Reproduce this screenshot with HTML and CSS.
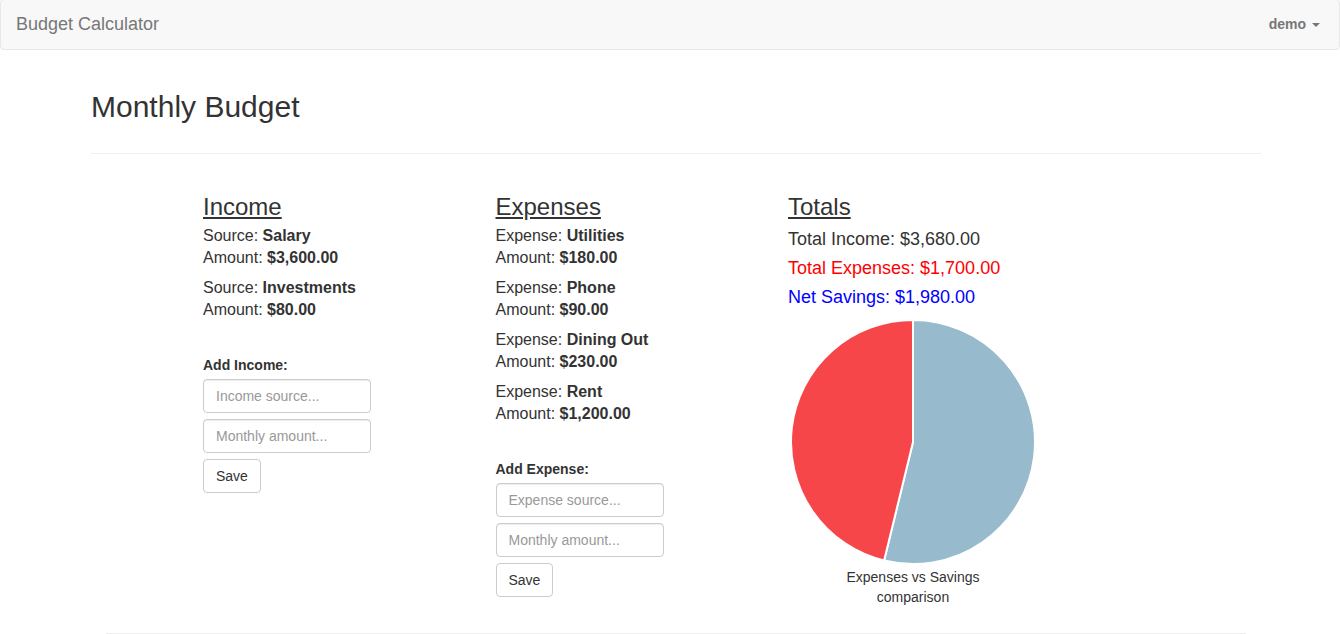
FILE: index.html
```html
<!DOCTYPE html>
<html lang="en">
<head>
<meta charset="utf-8">
<title>Budget Calculator</title>
<link rel="stylesheet" href="styles.css">
</head>
<body>
<nav class="navbar">
  <a class="brand" href="#">Budget Calculator</a>
  <a class="user" href="#">demo <span class="caret"></span></a>
</nav>
<main class="page">
  <h2 class="title">Monthly Budget</h2>
  <hr class="rule">
  <div class="columns">
    <section class="col">
      <h3 class="col-title">Income</h3>
      <div class="item">Source: <b>Salary</b><br>Amount: <b>$3,600.00</b></div>
      <div class="item">Source: <b>Investments</b><br>Amount: <b>$80.00</b></div>
      <form class="add-form">
        <label class="form-label">Add Income:</label>
        <input class="field" type="text" placeholder="Income source...">
        <input class="field" type="text" placeholder="Monthly amount...">
        <button class="btn" type="button">Save</button>
      </form>
    </section>
    <section class="col">
      <h3 class="col-title">Expenses</h3>
      <div class="item">Expense: <b>Utilities</b><br>Amount: <b>$180.00</b></div>
      <div class="item">Expense: <b>Phone</b><br>Amount: <b>$90.00</b></div>
      <div class="item">Expense: <b>Dining Out</b><br>Amount: <b>$230.00</b></div>
      <div class="item">Expense: <b>Rent</b><br>Amount: <b>$1,200.00</b></div>
      <form class="add-form">
        <label class="form-label">Add Expense:</label>
        <input class="field" type="text" placeholder="Expense source...">
        <input class="field" type="text" placeholder="Monthly amount...">
        <button class="btn" type="button">Save</button>
      </form>
    </section>
    <section class="col">
      <h3 class="col-title">Totals</h3>
      <div class="total">Total Income: $3,680.00</div>
      <div class="total total-exp">Total Expenses: $1,700.00</div>
      <div class="total total-sav">Net Savings: $1,980.00</div>
      <svg class="pie" width="250" height="250" viewBox="0 0 250 250">
        <path d="M125,125 L125,3 A122,122 0 1,1 96.11,243.53 Z" fill="#97bbcd" stroke="#fff" stroke-width="2"/>
        <path d="M125,125 L96.11,243.53 A122,122 0 0,1 125,3 Z" fill="#f7464a" stroke="#fff" stroke-width="2"/>
      </svg>
      <div class="caption">Expenses vs Savings comparison</div>
    </section>
  </div>
  <hr class="rule-bottom">
</main>
</body>
</html>
```
FILE: styles.css
```css
* { box-sizing: border-box; }
html, body { margin: 0; padding: 0; }
body {
  font-family: "Liberation Sans", Arial, sans-serif;
  font-size: 14px;
  line-height: 20px;
  color: #333;
  background: #fff;
  overflow: hidden;
}
.navbar {
  height: 51px;
  margin-top: -1px;
  background: #f8f8f8;
  border: 1px solid #e7e7e7;
  border-radius: 4px;
  display: flex;
  justify-content: space-between;
  align-items: center;
}
.brand {
  padding-left: 15px;
  padding-bottom: 2px;
  font-size: 18px;
  line-height: 20px;
  color: #777;
  text-decoration: none;
}
.user {
  padding-right: 19px;
  padding-bottom: 2px;
  font-size: 14px;
  font-weight: bold;
  line-height: 20px;
  color: #777;
  text-decoration: none;
}
.caret {
  display: inline-block;
  width: 0;
  height: 0;
  margin-left: 2px;
  vertical-align: middle;
  border-top: 4px solid #777;
  border-left: 4px solid transparent;
  border-right: 4px solid transparent;
}
.page {
  width: 1261px;
  padding-left: 91px;
  padding-top: 20px;
}
.title {
  margin: 20px 0 0;
  font-size: 30px;
  font-weight: normal;
  line-height: 33px;
}
.rule {
  margin: 30px 0 20px;
  border: 0;
  border-top: 1px solid #eee;
  height: 0;
}
.columns {
  display: grid;
  grid-template-columns: repeat(3, 292.5px);
  padding-left: 112px;
}
.col-title {
  margin: 20px 0 5px;
  font-size: 24px;
  font-weight: normal;
  line-height: 26px;
  text-decoration: underline;
}
.item {
  font-size: 16px;
  line-height: 22px;
  margin-bottom: 8px;
}
.add-form { margin-top: 34px; }
.form-label {
  display: block;
  font-weight: bold;
  font-size: 14px;
  line-height: 20px;
  margin-bottom: 4px;
}
.field {
  display: block;
  width: 168px;
  height: 34px;
  margin: 0 0 6px;
  padding: 6px 12px;
  font-family: "Liberation Sans", Arial, sans-serif;
  font-size: 14px;
  color: #555;
  background: #fff;
  border: 1px solid #ccc;
  border-radius: 4px;
  box-shadow: inset 0 1px 1px rgba(0,0,0,.075);
}
.field::placeholder { color: #999; }
.btn {
  display: block;
  height: 34px;
  padding: 6px 12px;
  font-family: "Liberation Sans", Arial, sans-serif;
  font-size: 14px;
  line-height: 20px;
  color: #333;
  background: #fff;
  border: 1px solid #ccc;
  border-radius: 4px;
}
.total {
  font-size: 18px;
  line-height: 29px;
}
.total-exp { color: #ff0000; }
.total-sav { color: #0000ff; }
.pie {
  display: block;
  margin-top: 5px;
}
.caption {
  width: 250px;
  padding: 0 45px;
  text-align: center;
  font-size: 14px;
  line-height: 20px;
}
.rule-bottom {
  margin: 26px 15px 0;
  border: 0;
  border-top: 1px solid #eee;
  height: 0;
}
```
